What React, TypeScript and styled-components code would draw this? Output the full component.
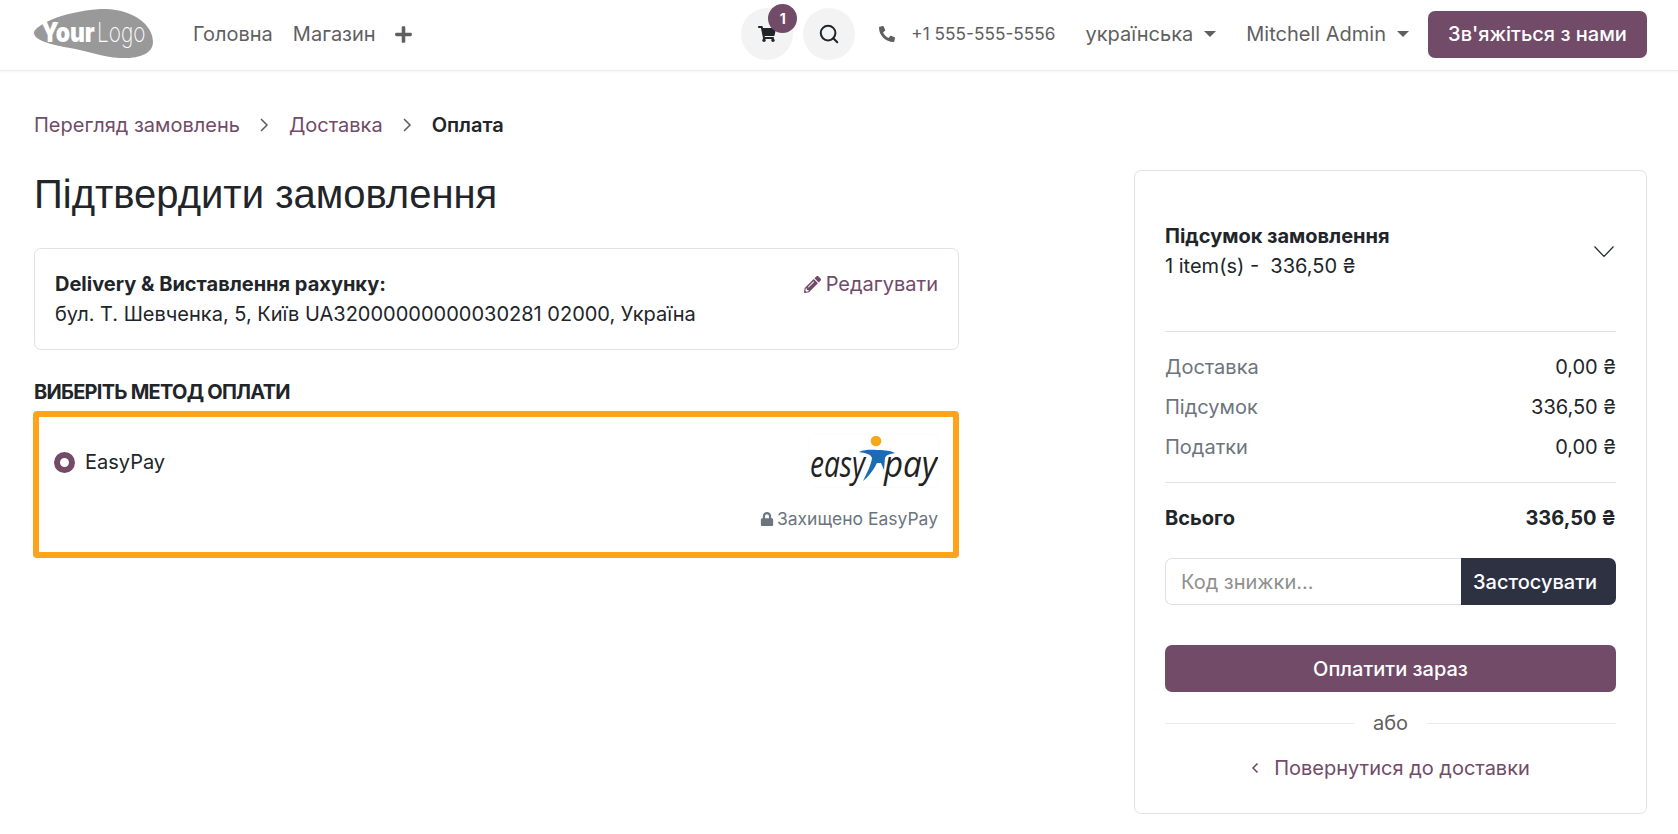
import React from 'react';
import styled, { createGlobalStyle } from 'styled-components';
import { FaShoppingCart, FaPhone, FaPlus, FaPencilAlt, FaLock } from 'react-icons/fa';
import { LuSearch } from 'react-icons/lu';

const plum = '#714b67';
const ink = '#212529';
const line = '#dee2e6';

const GlobalStyle = createGlobalStyle`
  * { box-sizing: border-box; }
  html, body { margin: 0; background: #fff; }
  body {
    font-family: Inter, "Noto Sans", sans-serif;
    font-size: 20px;
    line-height: 30px;
    color: ${ink};
  }
`;

const summaryRows = [
  { label: 'Доставка', value: '0,00 ₴' },
  { label: 'Підсумок', value: '336,50 ₴' },
  { label: 'Податки', value: '0,00 ₴' },
];

const Logo = () => (
  <svg width="120" height="50" viewBox="0 0 120 50">
    <path
      d="M0 23 C3 16 26 3 66 0 C96 -1 119 14 119 33 C119 45 104 50 86 49 C68 48 54 42 36 39 C20 36 -1 32 0 23 Z"
      fill="#999"
    />
    <text transform="translate(7 33) scale(0.85 1)" fontFamily="Inter" fontSize="27" fontWeight="900" fill="#fff">Your</text>
    <text transform="translate(63 33) scale(0.77 1)" fontFamily="Inter" fontSize="27" fontWeight="200" fill="#fff">Logo</text>
  </svg>
);

const EasyPayLogo = () => (
  <LogoTile>
    <svg width="128" height="54" viewBox="0 0 128 54">
      <path
        d="M49 17 C56 14 62 15 67 15 C72 15 79 15 85 18 C80 19 76 20 75 23 L74 35 L71 28 L67 28 C63 36 58 42 53 46 C57 38 61 30 62 23 C61 19 55 18 49 17 Z"
        fill="#1a6db5"
      />
      <circle cx="66" cy="6" r="5.3" fill="#f5a81c" />
      <text transform="translate(0 42) scale(0.78 1)" fontFamily="Open Sans" fontStyle="italic" fontWeight="500" fontSize="36" fill="#222">easy</text>
      <text transform="translate(74 42) scale(0.92 1)" fontFamily="Open Sans" fontStyle="italic" fontWeight="500" fontSize="36" fill="#222">pay</text>
    </svg>
  </LogoTile>
);

export default function App() {
  return (
    <>
      <GlobalStyle />
      <Header>
        <HeaderGroup>
          <LogoLink><Logo /></LogoLink>
          <NavLink>Головна</NavLink>
          <NavLink>Магазин</NavLink>
          <PlusIcon><FaPlus size={19} /></PlusIcon>
        </HeaderGroup>
        <HeaderGroup>
          <RoundButton>
            <FaShoppingCart size={18} />
            <Badge>1</Badge>
          </RoundButton>
          <RoundButton>
            <LuSearch size={22} strokeWidth={2.2} />
          </RoundButton>
          <Phone>
            <FaPhone size={16} style={{ transform: 'scaleX(-1)' }} />
            <PhoneNumber>+1 555-555-5556</PhoneNumber>
          </Phone>
          <Dropdown $gap={30}>українська<Caret /></Dropdown>
          <Dropdown $gap={19}>Mitchell Admin<Caret /></Dropdown>
          <ContactButton>Зв'яжіться з нами</ContactButton>
        </HeaderGroup>
      </Header>

      <Main>
        <LeftColumn>
          <Breadcrumbs>
            <CrumbLink>Перегляд замовлень</CrumbLink>
            <Chevron viewBox="0 0 11 16"><path d="M2 2l6 6-6 6" /></Chevron>
            <CrumbLink>Доставка</CrumbLink>
            <Chevron viewBox="0 0 11 16"><path d="M2 2l6 6-6 6" /></Chevron>
            <CrumbCurrent>Оплата</CrumbCurrent>
          </Breadcrumbs>
          <Title>Підтвердити замовлення</Title>
          <AddressCard>
            <div>
              <strong>Delivery &amp; Виставлення рахунку:</strong>
              <div>бул. Т. Шевченка, 5, Київ UA32000000000030281 02000, Україна</div>
            </div>
            <EditLink><FaPencilAlt size={17} />Редагувати</EditLink>
          </AddressCard>
          <SectionTitle>ВИБЕРІТЬ МЕТОД ОПЛАТИ</SectionTitle>
          <PaymentBox>
            <PaymentTop>
              <PaymentName>
                <Radio />
                EasyPay
              </PaymentName>
              <EasyPayLogo />
            </PaymentTop>
            <Secured><FaLock size={14} />Захищено EasyPay</Secured>
          </PaymentBox>
        </LeftColumn>

        <SummaryCard>
          <SummaryHead>
            <div>
              <strong>Підсумок замовлення</strong>
              <div>1 item(s) -&nbsp; 336,50 ₴</div>
            </div>
            <svg width="22" height="13" viewBox="0 0 22 13" fill="none" stroke={ink} strokeWidth="1.2">
              <path d="M1.5 1.5l9.5 10 9.5-10" />
            </svg>
          </SummaryHead>
          <SummaryRows>
            {summaryRows.map((row) => (
              <Row key={row.label}>
                <RowLabel>{row.label}</RowLabel>
                <span>{row.value}</span>
              </Row>
            ))}
          </SummaryRows>
          <TotalRow>
            <span>Всього</span>
            <span>336,50 ₴</span>
          </TotalRow>
          <PromoForm>
            <PromoInput placeholder="Код знижки..." />
            <PromoButton>Застосувати</PromoButton>
          </PromoForm>
          <PayButton>Оплатити зараз</PayButton>
          <OrDivider>або</OrDivider>
          <BackLink>
            <svg width="9" height="12" viewBox="0 0 9 12" fill="none" stroke={plum} strokeWidth="1.6">
              <path d="M6.5 1.5L2 6l4.5 4.5" />
            </svg>
            Повернутися до доставки
          </BackLink>
        </SummaryCard>
      </Main>
    </>
  );
}

const Header = styled.header`
  height: 71px;
  display: flex;
  align-items: center;
  justify-content: space-between;
  padding: 0 31px 2px 34px;
  border-bottom: 1px solid #ececec;
  box-shadow: 0 1px 2px rgba(0, 0, 0, 0.04);
  color: #5f5f5f;
`;

const HeaderGroup = styled.div`
  display: flex;
  align-items: center;
`;

const LogoLink = styled.a`
  display: flex;
  margin-right: 39px;
`;

const NavLink = styled.a`
  margin-right: 20px;
`;

const PlusIcon = styled.span`
  display: flex;
  margin-left: -2px;
  color: #5f5f5f;
`;

const RoundButton = styled.button`
  position: relative;
  width: 52px;
  height: 52px;
  margin-right: 10px;
  border: 0;
  border-radius: 50%;
  background: #f3f3f3;
  color: ${ink};
  display: flex;
  align-items: center;
  justify-content: center;
  padding: 0;
`;

const Badge = styled.span`
  position: absolute;
  top: -4px;
  right: -4px;
  width: 29px;
  height: 29px;
  border-radius: 50%;
  background: ${plum};
  color: #fff;
  font-family: Inter, sans-serif;
  font-size: 14px;
  font-weight: 700;
  line-height: 29px;
  text-align: center;
`;

const Phone = styled.div`
  display: flex;
  align-items: center;
  margin: 0 30px 0 14px;
`;

const PhoneNumber = styled.span`
  margin-left: 16px;
  font-size: 17.25px;
`;

const Dropdown = styled.a<{ $gap: number }>`
  display: flex;
  align-items: center;
  margin-right: ${(p) => p.$gap}px;
`;

const Caret = styled.span`
  margin-left: 11px;
  border-top: 6px solid #5f5f5f;
  border-left: 6px solid transparent;
  border-right: 6px solid transparent;
`;

const ContactButton = styled.button`
  width: 219px;
  height: 47px;
  border: 0;
  border-radius: 7px;
  background: ${plum};
  color: #fff;
  font: 500 20px Inter, sans-serif;
`;

const Main = styled.main`
  display: grid;
  grid-template-columns: 926px 513px;
  justify-content: space-between;
  padding: 0 31px 0 33px;
`;

const LeftColumn = styled.div`
  padding-top: 39px;
`;

const Breadcrumbs = styled.nav`
  display: flex;
  align-items: center;
  gap: 19px;
  height: 30px;
  padding-left: 1px;
`;

const CrumbLink = styled.a`
  color: ${plum};
`;

const CrumbCurrent = styled.span`
  font-weight: 600;
`;

const Chevron = styled.svg`
  width: 11px;
  height: 16px;
  fill: none;
  stroke: #5c5c5c;
  stroke-width: 1.5;
`;

const Title = styled.h1`
  margin: 30px 0 0 1px;
  font-family: "Liberation Sans", Arial, sans-serif;
  font-size: 40px;
  line-height: 48px;
  font-weight: 400;
`;

const AddressCard = styled.section`
  margin: 30px 0 0 1px;
  height: 102px;
  display: flex;
  justify-content: space-between;
  padding: 20px;
  border: 1px solid ${line};
  border-radius: 7px;

  strong {
    font-weight: 700;
  }
`;

const EditLink = styled.a`
  display: flex;
  align-items: flex-start;
  gap: 5px;
  color: ${plum};

  svg {
    margin-top: 7px;
  }
`;

const SectionTitle = styled.h2`
  margin: 27px 0 0 1px;
  font-size: 20px;
  line-height: 30px;
  font-weight: 700;
  letter-spacing: -0.75px;
`;

const PaymentBox = styled.section`
  margin-top: 4px;
  height: 147px;
  padding: 18px 15px 0 15px;
  border: 6px solid #ffa31a;
  border-radius: 4px;
`;

const PaymentTop = styled.div`
  display: flex;
  justify-content: space-between;
  align-items: center;
`;

const PaymentName = styled.div`
  display: flex;
  align-items: center;
  gap: 10px;
  padding-top: 2px;
`;

const Radio = styled.span`
  width: 21px;
  height: 21px;
  border-radius: 50%;
  border: 6px solid ${plum};
  background: #fff;
`;

const LogoTile = styled.div`
  display: flex;
  width: 128px;
  height: 52px;
  border-radius: 6px;
  box-shadow: 0 0 3px rgba(0, 0, 0, 0.04);
`;

const Secured = styled.div`
  display: flex;
  align-items: center;
  justify-content: flex-end;
  gap: 3px;
  margin-top: 20px;
  font-size: 17.5px;
  line-height: 24px;
  color: #6c757d;
`;

const SummaryCard = styled.aside`
  margin-top: 99px;
  height: 644px;
  padding: 0 30px;
  border: 1px solid ${line};
  border-radius: 7px;
`;

const SummaryHead = styled.div`
  height: 161px;
  display: flex;
  align-items: center;
  justify-content: space-between;
  padding: 0 1px 0 0;
  border-bottom: 1px solid ${line};

  strong {
    font-weight: 700;
  }
`;

const SummaryRows = styled.div`
  display: flex;
  flex-direction: column;
  gap: 10px;
  padding: 20px 0;
  border-bottom: 1px solid ${line};
`;

const Row = styled.div`
  display: flex;
  justify-content: space-between;
`;

const RowLabel = styled.span`
  color: #6c757d;
`;

const TotalRow = styled(Row)`
  margin-top: 20px;
  font-weight: 700;
`;

const PromoForm = styled.form`
  display: flex;
  height: 47px;
  margin-top: 25px;
`;

const PromoInput = styled.input`
  flex: 1;
  min-width: 0;
  padding: 0 15px;
  border: 1px solid ${line};
  border-right: 0;
  border-radius: 7px 0 0 7px;
  font: 20px Inter, sans-serif;
  outline: none;

  &::placeholder {
    color: #8f8f8f;
  }
`;

const PromoButton = styled.button`
  width: 155px;
  padding: 0 0 0 12px;
  text-align: left;
  border: 0;
  border-radius: 0 7px 7px 0;
  background: #2d3142;
  color: #fff;
  font: 500 20px Inter, sans-serif;
`;

const PayButton = styled.button`
  display: block;
  width: 100%;
  height: 47px;
  margin-top: 40px;
  border: 0;
  border-radius: 7px;
  background: ${plum};
  color: #fff;
  font: 500 20px Inter, sans-serif;
`;

const OrDivider = styled.div`
  display: flex;
  align-items: center;
  gap: 19px;
  margin-top: 16px;
  color: #5f5f5f;

  &::before,
  &::after {
    content: '';
    flex: 1;
    border-top: 1px solid #e9ecef;
  }
`;

const BackLink = styled.a`
  display: flex;
  align-items: center;
  justify-content: center;
  gap: 14px;
  margin-top: 15px;
  color: ${plum};
`;
